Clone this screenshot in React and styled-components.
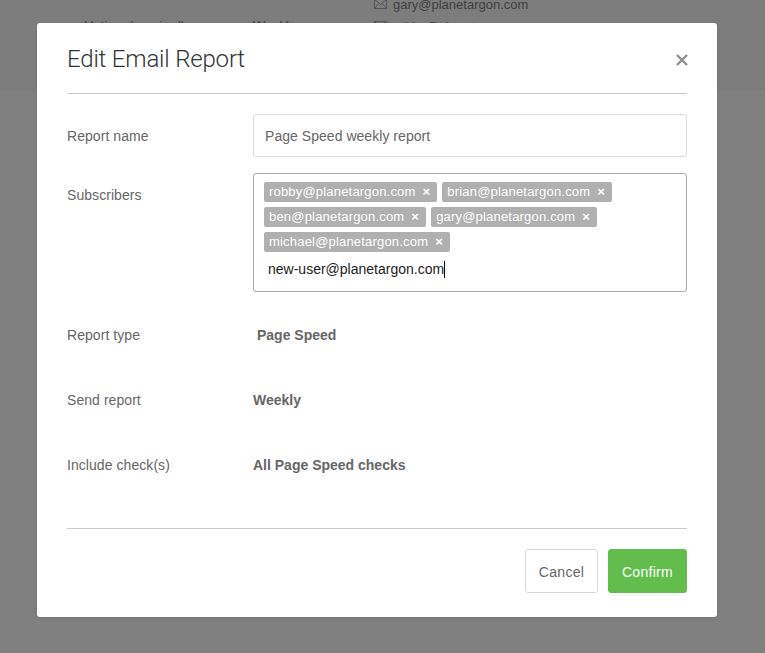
import React from "react";
import styled, { createGlobalStyle } from "styled-components";

const Global = createGlobalStyle`
  html, body { margin: 0; padding: 0; height: 100%; }
  body { font-family: "Liberation Sans", Arial, sans-serif; background: #808080; overflow: hidden; }
  * { box-sizing: border-box; }
`;

const Page = styled.div`
  position: relative;
  width: 765px;
  height: 653px;
  background: #808080;
  overflow: hidden;
`;

const BackHeader = styled.div`
  height: 91px;
  background: #7d7d7d;
  display: grid;
  grid-template-columns: 253px 121px 1fr;
  font-size: 13px;
  color: #3f3f3f;
`;

const BackCell = styled.div`
  padding-top: ${(p) => p.$top || 0}px;
  padding-left: ${(p) => p.$left || 0}px;
`;

const BackMail = styled.div`
  display: flex;
  align-items: center;
  gap: 6px;
  height: 22px;
  margin-top: ${(p) => p.$mt || 0}px;
`;

const Modal = styled.div`
  position: absolute;
  left: 37px;
  top: 23px;
  width: 680px;
  height: 594px;
  background: #fff;
  border-radius: 3px;
  padding: 0 30px;
  box-shadow: 0 1px 4px rgba(0, 0, 0, 0.1);
`;

const Header = styled.div`
  height: 71px;
  border-bottom: 1px solid #c8c8c8;
  display: flex;
  justify-content: space-between;
  align-items: flex-start;
`;

const Title = styled.h2`
  margin: 20px 0 0;
  font-family: Roboto, "Liberation Sans", sans-serif;
  font-weight: 300;
  font-size: 24px;
  line-height: 32px;
  letter-spacing: -0.18px;
  color: #333;
`;

const Close = styled.button`
  border: 0;
  background: none;
  padding: 0;
  margin: 30px -2px 0 0;
  width: 14px;
  height: 14px;
  display: block;
  color: #8f8f8f;
`;

const Form = styled.div`
  padding-top: 20px;
`;

const Row = styled.div`
  display: grid;
  grid-template-columns: 186px 1fr;
  align-items: ${(p) => (p.$top ? "start" : "center")};
  min-height: ${(p) => p.$h || 0}px;
  margin-bottom: ${(p) => p.$mb || 0}px;
`;

const Label = styled.div`
  font-size: 14px;
  line-height: 20px;
  letter-spacing: 0.06px;
  color: #666;
  padding-top: ${(p) => p.$pt || 0}px;
`;

const TextBox = styled.div`
  height: 43px;
  border: 1px solid #ddd;
  border-radius: 3px;
  padding: 0 11px;
  display: flex;
  align-items: center;
  font-size: 14px;
  letter-spacing: 0.04px;
  color: #666;
`;

const TagBox = styled.div`
  height: 119px;
  border: 1px solid #a9a9a9;
  border-radius: 3px;
  padding: 8px 10px 0;
  display: flex;
  flex-wrap: wrap;
  align-content: flex-start;
  gap: 5px;
`;

const Tag = styled.span`
  display: inline-flex;
  align-items: center;
  height: 20px;
  padding: 0 5px 1px;
  background: #b0b0b0;
  border-radius: 2px;
  color: #fff;
  font-size: 13px;
  letter-spacing: 0.19px;
  white-space: nowrap;
`;

const TagX = styled.span`
  margin-left: 7px;
  margin-right: 2px;
  font-size: 13px;
  font-weight: 700;
  line-height: 1;
`;

const TypedLine = styled.div`
  width: 100%;
  height: 22px;
  margin-top: 1px;
  padding-left: 4px;
  display: flex;
  align-items: center;
  font-size: 14px;
  color: #222;
`;

const Caret = styled.span`
  display: inline-block;
  width: 1px;
  height: 17px;
  background: #000;
`;

const Value = styled.div`
  font-size: 14px;
  line-height: 20px;
  font-weight: 700;
  color: #666;
  padding-left: ${(p) => p.$indent || 0}px;
`;

const Footer = styled.div`
  border-top: 1px solid #c8c8c8;
  margin-top: 53px;
  padding-top: 20px;
  display: flex;
  justify-content: flex-end;
  gap: 10px;
`;

const Button = styled.button`
  height: 44px;
  width: ${(p) => p.$w}px;
  border-radius: 3px;
  font: 14px "Liberation Sans", Arial, sans-serif;
  letter-spacing: 0.3px;
  border: 1px solid ${(p) => (p.$primary ? "#62bd4c" : "#d8d8d8")};
  background: ${(p) => (p.$primary ? "#62bd4c" : "#fff")};
  color: ${(p) => (p.$primary ? "#fff" : "#666")};
  padding: 2px 0 0;
`;

const tags = [
  "robby@planetargon.com",
  "brian@planetargon.com",
  "ben@planetargon.com",
  "gary@planetargon.com",
  "michael@planetargon.com",
];

const Mail = () => (
  <svg width="13" height="10" viewBox="0 0 13 10" fill="none" stroke="#555" strokeWidth="1">
    <rect x="0.5" y="0.5" width="12" height="9" />
    <path d="M0.5 0.5l6 5 6-5M0.5 9.5l4.5-5M12.5 9.5l-4.5-5" />
  </svg>
);

export default function App() {
  return (
    <Page>
      <Global />
      <BackHeader>
        <BackCell $top={18} $left={84}>Uptime (required)</BackCell>
        <BackCell $top={18}>Weekly</BackCell>
        <BackCell>
          <BackMail $mt={-7}><Mail />gary@planetargon.com</BackMail>
          <BackMail><Mail />robby@planetargon.com</BackMail>
        </BackCell>
      </BackHeader>
      <Modal>
        <Header>
          <Title>Edit Email Report</Title>
          <Close aria-label="Close">
            <svg width="14" height="14" viewBox="0 0 14 14" stroke="currentColor" strokeWidth="2.4">
              <path d="M2 2l10 10M12 2L2 12" />
            </svg>
          </Close>
        </Header>
        <Form>
          <Row $mb={16}>
            <Label>Report name</Label>
            <TextBox>Page Speed weekly report</TextBox>
          </Row>
          <Row $top $mb={33}>
            <Label $pt={12}>Subscribers</Label>
            <TagBox>
              {tags.map((t) => (
                <Tag key={t}>
                  {t}
                  <TagX>×</TagX>
                </Tag>
              ))}
              <TypedLine>
                new-user@planetargon.com
                <Caret />
              </TypedLine>
            </TagBox>
          </Row>
          <Row $h={20} $mb={45}>
            <Label>Report type</Label>
            <Value $indent={4}>Page Speed</Value>
          </Row>
          <Row $h={20} $mb={45}>
            <Label>Send report</Label>
            <Value>Weekly</Value>
          </Row>
          <Row $h={20}>
            <Label>Include check(s)</Label>
            <Value>All Page Speed checks</Value>
          </Row>
        </Form>
        <Footer>
          <Button $w={73}>Cancel</Button>
          <Button $w={79} $primary>Confirm</Button>
        </Footer>
      </Modal>
    </Page>
  );
}
